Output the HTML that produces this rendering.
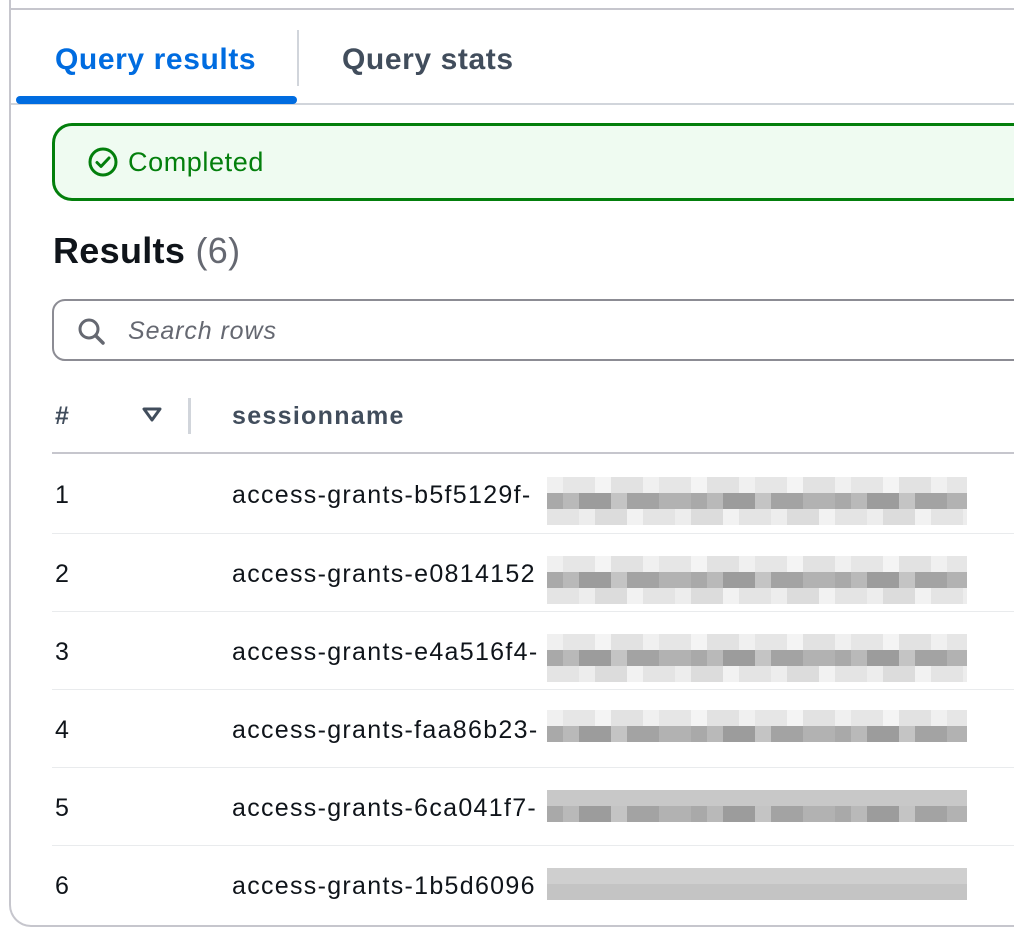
<!DOCTYPE html>
<html><head><meta charset="utf-8"><style>
*{box-sizing:border-box;margin:0;padding:0}
body{width:1014px;height:950px;background:#fff;font-family:"Liberation Sans",sans-serif;position:relative;overflow:hidden;color:#0f141a}
.box{position:absolute;left:9px;top:8px;width:1040px;height:919px;border:2px solid #c6c6cd;border-radius:0 0 0 22px;border-right:none}
.tab{position:absolute;top:40px;font-size:30px;font-weight:bold;line-height:40px;letter-spacing:0.6px}
.abs{position:absolute}
.row{position:absolute;left:52px;width:962px;height:78px;border-top:1px solid #e9ebed}
.row .n{position:absolute;left:3px;top:25px;font-size:25px;line-height:30px}
.row .t{position:absolute;left:180px;top:25px;font-size:25px;line-height:30px;letter-spacing:1.3px}
.blur{position:absolute;left:489px;top:0;width:446px;height:77px;background:#fff}
.blur .a,.blur .b,.blur .c{position:absolute;left:6px;height:16px}
.blur .a{top:22px;width:420px;background:repeating-linear-gradient(90deg,#f0f0f0 0 16px,#e6e6e6 16px 48px,#f4f4f4 48px 64px,#e2e2e2 64px 96px)}
.blur .b{top:38px;width:420px;background:repeating-linear-gradient(90deg,#a9a9a9 0 16px,#b9b9b9 16px 32px,#9c9c9c 32px 64px,#c4c4c4 64px 80px,#a3a3a3 80px 112px,#b2b2b2 112px 144px)}
.blur .c{top:54px;width:420px;background:repeating-linear-gradient(90deg,#e4e4e4 0 32px,#ededed 32px 48px,#dcdcdc 48px 80px,#f2f2f2 80px 96px)}
</style></head><body>
<div class="box"></div>
<div class="abs" style="left:9px;top:0;width:2px;height:10px;background:#c6c6cd"></div>
<div class="tab" style="left:55px;color:#006ce0">Query results</div>
<div class="tab" style="left:342px;color:#414d5c">Query stats</div>
<div class="abs" style="left:297px;top:30px;width:2px;height:56px;background:#d1d5db"></div>
<div class="abs" style="left:11px;top:103px;width:1003px;height:2px;background:#d1d5db"></div>
<div class="abs" style="left:16px;top:96px;width:281px;height:8px;background:#006ce0;border-radius:4px"></div>

<div class="abs" style="left:52px;top:123px;width:1000px;height:78px;border:3px solid #037f0c;border-radius:20px;background:#effbf1"></div>
<svg class="abs" style="left:87px;top:146px" width="32" height="32" viewBox="0 0 32 32"><circle cx="16" cy="16" r="13" fill="none" stroke="#037f0c" stroke-width="3"/><path d="M10 16.5l4 4 8-8.5" fill="none" stroke="#037f0c" stroke-width="3" stroke-linecap="round" stroke-linejoin="round"/></svg>
<div class="abs" style="left:128px;top:146px;font-size:27px;line-height:32px;color:#037f0c;letter-spacing:0.6px">Completed</div>

<div class="abs" style="left:53px;top:229px;font-size:36px;line-height:44px;font-weight:bold;letter-spacing:0.3px">Results <span style="font-weight:normal;color:#656871">(6)</span></div>

<div class="abs" style="left:52px;top:299px;width:1000px;height:62px;border:2px solid #8c8c94;border-radius:13px"></div>
<svg class="abs" style="left:76px;top:316px" width="30" height="30" viewBox="0 0 30 30"><circle cx="13" cy="13" r="9" fill="none" stroke="#656871" stroke-width="3"/><path d="M20 20l7 7" stroke="#656871" stroke-width="3.5" stroke-linecap="round"/></svg>
<div class="abs" style="left:128px;top:316px;font-size:25px;line-height:30px;font-style:italic;color:#656871;letter-spacing:0.9px">Search rows</div>

<div class="abs" style="left:55px;top:401px;font-size:25px;line-height:30px;font-weight:bold;color:#414d5c">#</div>
<svg class="abs" style="left:141px;top:405px" width="22" height="20" viewBox="0 0 22 20"><path d="M3 4h16l-8 11z" fill="none" stroke="#414d5c" stroke-width="3" stroke-linejoin="round"/></svg>
<div class="abs" style="left:188px;top:398px;width:3px;height:36px;background:#d1d5db"></div>
<div class="abs" style="left:232px;top:401px;font-size:25px;line-height:30px;font-weight:bold;color:#414d5c;letter-spacing:1.3px">sessionname</div>
<div class="abs" style="left:52px;top:452px;width:962px;height:2px;background:#c6c6cd"></div>

<div class="row" style="top:455px;border-top:none"><div class="n">1</div><div class="t">access-grants-b5f5129f-</div><div class="blur"><div class="a"></div><div class="b"></div><div class="c"></div></div></div>
<div class="row" style="top:533px"><div class="n">2</div><div class="t">access-grants-e0814152</div><div class="blur"><div class="a"></div><div class="b"></div><div class="c"></div></div></div>
<div class="row" style="top:611px"><div class="n">3</div><div class="t">access-grants-e4a516f4-</div><div class="blur"><div class="a"></div><div class="b"></div><div class="c"></div></div></div>
<div class="row" style="top:689px"><div class="n">4</div><div class="t">access-grants-faa86b23-</div><div class="blur"><div class="a" style="top:20px"></div><div class="b" style="top:36px"></div></div></div>
<div class="row" style="top:767px"><div class="n">5</div><div class="t">access-grants-6ca041f7-</div><div class="blur"><div class="a" style="top:22px;background:#c8c8c8"></div><div class="b" style="top:38px"></div></div></div>
<div class="row" style="top:845px"><div class="n">6</div><div class="t">access-grants-1b5d6096</div><div class="blur"><div class="a" style="top:22px;background:#cfcfcf"></div><div class="b" style="top:38px;background:#c4c4c4"></div></div></div>
</body></html>
